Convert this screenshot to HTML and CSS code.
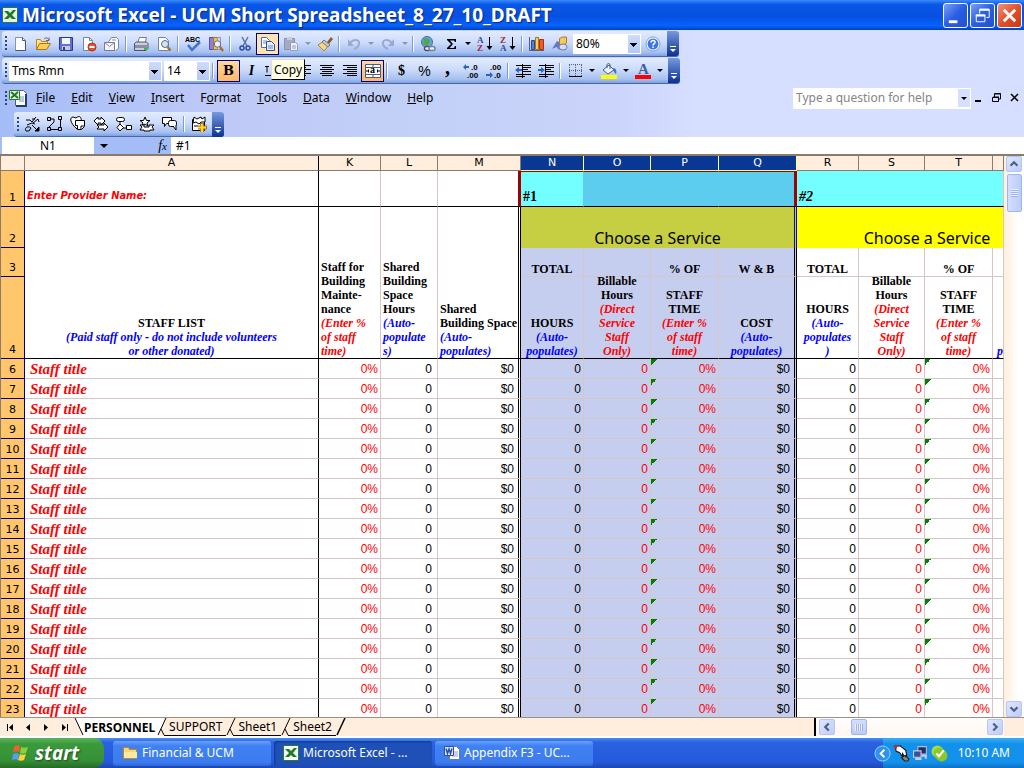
FILE: index.html
```html
<!DOCTYPE html>
<html lang="en">
<head>
<meta charset="utf-8">
<title>Microsoft Excel - UCM Short Spreadsheet_8_27_10_DRAFT</title>
<link rel="stylesheet" href="styles.css">
</head>
<body>
<header class="titlebar">
  <svg class="i16" viewBox="0 0 16 16"><rect x=".5" y=".5" width="15" height="15" fill="#e8f2e4" stroke="#2c7a2c"/><path d="M2 4h4l2 2 3-3h3l-4 5 4 4h-4l-2-2-2 2H2l4-4z" fill="#1f7a2a"/></svg>
  <h1>Microsoft Excel - UCM Short Spreadsheet_8_27_10_DRAFT</h1>
  <button class="wbtn" aria-label="Minimize"><svg viewBox="0 0 24 24"><path d="M5 17h9v3H5z" fill="#fff"/></svg></button>
  <button class="wbtn" aria-label="Restore"><svg viewBox="0 0 24 24" fill="none" stroke="#fff"><path d="M9 10V5.500h10V14h-3"/><path d="M9 6h10M5 12h10" stroke-width="2"/><path d="M5.500 11.500h9v7h-9z"/></svg></button>
  <button class="wbtn close" aria-label="Close"><svg viewBox="0 0 24 24"><path d="M6 6l12 12M18 6L6 18" stroke="#fff" stroke-width="3"/></svg></button>
</header>

<section class="bars">
  <div class="toolbar">
    <span class="grip"></span>
    <button class="btn" aria-label="New"><svg viewBox="0 0 16 16"><path d="M3.500 1.500h7l3 3v10h-10z" fill="#fff" stroke="#8793b5"/><path d="M10.500 1.500v3h3M13.500 5v9.500h-10" fill="none" stroke="#46547c"/></svg></button>
    <button class="btn" aria-label="Open"><svg viewBox="0 0 16 16"><path d="M1.500 13.500v-10h4l1 2h6v3" fill="#ffe58b" stroke="#b9862a"/><path d="M1.500 13.500l3-6h11l-4 6z" fill="#ffcf55" stroke="#a8741c"/><path d="M9 3c2-2 4-1 5 1M14 1.500V4.500h-3" fill="none" stroke="#5a6788"/></svg></button>
    <button class="btn" aria-label="Save"><svg viewBox="0 0 16 16"><path d="M1.500 1.500h13v13h-12l-1-1z" fill="#6071cf" stroke="#2c3a91"/><path d="M4 2h8v6H4z" fill="#f4f6ff"/><path d="M4 10h8v4H4z" fill="#c4c9de"/><path d="M5 11h2v3H5z" fill="#2c3a91"/></svg></button>
    <button class="btn" aria-label="Permission"><svg viewBox="0 0 16 16"><path d="M2.500 1.500h6l3 3v10h-9z" fill="#fff" stroke="#7785ad"/><path d="M8.500 1.500v3h3" fill="none" stroke="#7785ad"/><circle cx="11" cy="11" r="4" fill="#e4502e" stroke="#b53418"/><path d="M8.500 10h5v2h-5z" fill="#fff"/></svg></button>
    <button class="btn" aria-label="E-mail"><svg viewBox="0 0 16 16"><path d="M4.500 6l3-4.500h5l2 2v9l-3 2" fill="#fff" stroke="#7785ad"/><path d="M.5 6.500h10v8H.5z" fill="#f3f3f8" stroke="#777c90"/><path d="M.5 6.500l5 4 5-4M8 4h4" fill="none" stroke="#8b8fa3"/></svg></button>
    <span class="sep"></span>
    <button class="btn" aria-label="Print"><svg viewBox="0 0 16 16"><path d="M4.500 7l2-5.500h7L12 7" fill="#fff" stroke="#6b7aa5"/><path d="M1.500 7.500l2-1.500h10l1.500 1.500v5l-2 2H1.500z" fill="#c9cddc" stroke="#4c5468"/><path d="M2 9h12v3H2z" fill="#888fa6"/><path d="M11 12h3v2h-3z" fill="#2fc33c"/></svg></button>
    <button class="btn" aria-label="Print Preview"><svg viewBox="0 0 16 16"><path d="M2.500 1.500h7l3 3v10h-10z" fill="#fff" stroke="#7785ad"/><circle cx="9" cy="8" r="3.500" fill="#cde4fa" stroke="#5c6b8c"/><path d="M11.500 11l3 3.500" stroke="#b06a27" stroke-width="2.500"/></svg></button>
    <span class="sep"></span>
    <button class="btn" aria-label="Spelling"><svg viewBox="0 0 16 16"><text x="0" y="6" font-size="7" font-family="Liberation Sans" font-weight="700">ABC</text><path d="M3 9l4 5 8-8" fill="none" stroke="#3d73d8" stroke-width="2.500"/></svg></button>
    <button class="btn" aria-label="Research"><svg viewBox="0 0 16 16"><path d="M1.500 1.500h4v12h-4z" fill="#8c7fe0" stroke="#5c4cb0"/><path d="M5.500 1.500h4v12h-4z" fill="#f5bf43" stroke="#a87520"/><path d="M9.500 1.500h3v12h-3z" fill="#d2d8f6" stroke="#8b93c9"/><circle cx="9.500" cy="8" r="3.200" fill="#eaf4ff" stroke="#676d84"/><path d="M12 11l3 4" stroke="#b06a27" stroke-width="2.500"/></svg></button>
    <span class="sep"></span>
    <button class="btn" aria-label="Cut"><svg viewBox="0 0 16 16" fill="none"><path d="M5 1l5 9M11 1L6 10" stroke="#5874ae" stroke-width="1.500"/><circle cx="5" cy="12" r="2" stroke="#2d4f9c" stroke-width="1.500"/><circle cx="11" cy="12" r="2" stroke="#2d4f9c" stroke-width="1.500"/></svg></button>
    <button class="btn on copy" aria-label="Copy"><svg viewBox="0 0 16 16"><path d="M1.500 1.500h5l3 3v7h-8z" fill="#fff" stroke="#4c6ab5"/><path d="M6.500 5.500h5l3 3v6h-8z" fill="#e2ecff" stroke="#2d4f9c"/><path d="M3 5h4M3 7h3M8 10h5M8 12h5" stroke="#6a87c8"/></svg></button>
    <button class="btn" aria-label="Paste"><svg viewBox="0 0 16 16"><path d="M1.500 2.500h10v11h-10z" fill="#a3aac6" stroke="#8a92b4"/><path d="M4 1h5v3H4z" fill="#c8cde0"/><path d="M7.500 6.500h5l2 2v6h-7z" fill="#edf0fa" stroke="#949cbd"/><path d="M9 10h4M9 12h4" stroke="#949cbd"/></svg></button>
    <button class="arr dim" aria-label="Paste options"></button>
    <button class="btn" aria-label="Format Painter"><svg viewBox="0 0 16 16"><path d="M10 6l4-5 2 2-4 5z" fill="#8c5b22"/><path d="M1 9l6-4 5 4-5 6z" fill="#f6d583" stroke="#b08538"/><path d="M7 4l6 5-2 2-6-5z" fill="#c9c9d6" stroke="#777"/></svg></button>
    <span class="sep"></span>
    <button class="btn" aria-label="Undo"><svg viewBox="0 0 16 16"><path d="M4 7c4-5 10-3 9 1-.5 2-2 4-5 5" fill="none" stroke="#9ba8d1" stroke-width="2"/><path d="M2 3v7h6z" fill="#9ba8d1"/></svg></button>
    <button class="arr dim" aria-label="Undo list"></button>
    <button class="btn" aria-label="Redo"><svg viewBox="0 0 16 16"><path d="M12 7C8 2 2 4 3 8c.5 2 2 4 5 5" fill="none" stroke="#9ba8d1" stroke-width="2"/><path d="M14 3v7H8z" fill="#9ba8d1"/></svg></button>
    <button class="arr dim" aria-label="Redo list"></button>
    <span class="sep"></span>
    <button class="btn" aria-label="Hyperlink"><svg viewBox="0 0 16 16"><circle cx="7" cy="6" r="5.500" fill="#6aa2e0" stroke="#3b6fb0"/><path d="M4 2l5 1 1 3-3 4-4-2z" fill="#4fa845"/><rect x="4.500" y="10.500" width="6" height="4" rx="2" fill="#e6eaf4" stroke="#4a5568" stroke-width="1.500"/><rect x="9" y="10.500" width="6" height="4" rx="2" fill="#e6eaf4" stroke="#76829a" stroke-width="1.500"/></svg></button>
    <button class="btn" aria-label="AutoSum"><svg viewBox="0 0 16 16"><path d="M4 3h9v3h-1l-1-1.500H7L10 8l-3.500 4H11l1-2h1v3H4v-1l4-4-4-4z"/></svg></button>
    <button class="arr" aria-label="Sum options"></button>
    <button class="btn" aria-label="Sort Ascending"><svg viewBox="0 0 16 16"><text x="0" y="7" font-size="9" font-family="Liberation Serif" font-weight="700" fill="#2d4f9c">A</text><text x="0" y="15" font-size="9" font-family="Liberation Serif" font-weight="700" fill="#a3263c">Z</text><path d="M12.500 1v12" stroke="#000"/><path d="M9.500 10h6l-3 4z"/></svg></button>
    <button class="btn" aria-label="Sort Descending"><svg viewBox="0 0 16 16"><text x="0" y="7" font-size="9" font-family="Liberation Serif" font-weight="700" fill="#a3263c">Z</text><text x="0" y="15" font-size="9" font-family="Liberation Serif" font-weight="700" fill="#2d4f9c">A</text><path d="M12.500 1v12" stroke="#000"/><path d="M9.500 10h6l-3 4z"/></svg></button>
    <span class="sep"></span>
    <button class="btn" aria-label="Chart Wizard"><svg viewBox="0 0 16 16"><path d="M.5 1v13.500H15" fill="none" stroke="#555e7c"/><path d="M2.500 4.500h3v9h-3z" fill="#4f7fe0" stroke="#274b9c"/><path d="M6.500 1.500h3v12h-3z" fill="#ffd24a" stroke="#a5761b"/><path d="M10.500 3.500h4v10h-4z" fill="#ee5a2c" stroke="#a5330f"/></svg></button>
    <button class="btn" aria-label="Drawing"><svg viewBox="0 0 16 16"><path d="M7.500 2.500l3-1.500h4v6l-3 2h-4z" fill="#f5c95a" stroke="#aa7e2a"/><path d="M0 13l5-8 2 1 2 8-3-1-1-2-3 1z" fill="#6974c9"/><ellipse cx="11" cy="11" rx="4" ry="3" fill="#d9deee" stroke="#747c9a"/></svg></button>
    <select class="combo zoom" aria-label="Zoom"><option>80%</option></select>
    <button class="btn" aria-label="Help"><svg viewBox="0 0 16 16"><circle cx="8" cy="8" r="7" fill="#fff" stroke="#7b9ee5"/><circle cx="8" cy="8" r="5.500" fill="#3d78e0"/><path d="M6 6.500c0-3 4.500-2.500 4 0-.3 1.200-2 1.200-2 3M8 10.500V12" fill="none" stroke="#fff" stroke-width="1.500"/></svg></button>
    <button class="tail" aria-label="Toolbar options"><svg viewBox="0 0 8 8"><path d="M1 1.500h6" stroke="#fff"/><path d="M1 4h6L4 7z" fill="#fff"/></svg></button>
  </div>

  <div class="toolbar">
    <span class="grip"></span>
    <select class="combo face" aria-label="Font"><option>Tms Rmn</option></select>
    <select class="combo size" aria-label="Font size"><option>14</option></select>
    <span class="sep"></span>
    <button class="btn on glyph bold">B</button>
    <button class="btn glyph ital">I</button>
    <button class="btn glyph under" aria-label="Underline"><svg viewBox="0 0 16 16"><path d="M2 3.500h4M4 3.500v6M2 12.500h12" stroke="#000"/></svg></button>
    <span class="sep"></span>
    <button class="btn" aria-label="Align Left"><svg viewBox="0 0 16 16" stroke="#000"><path d="M1 2.500h14M1 4.500h9M1 6.500h14M1 8.500h9M1 10.500h14M1 12.500h9"/></svg></button>
    <button class="btn" aria-label="Center"><svg viewBox="0 0 16 16" stroke="#000"><path d="M1 2.500h14M3 4.500h10M1 6.500h14M3 8.500h10M1 10.500h14M3 12.500h10"/></svg></button>
    <button class="btn" aria-label="Align Right"><svg viewBox="0 0 16 16" stroke="#000"><path d="M1 2.500h14M5 4.500h10M1 6.500h14M5 8.500h10M1 10.500h14M5 12.500h10"/></svg></button>
    <button class="btn on" aria-label="Merge and Center"><svg viewBox="0 0 16 16"><path d="M.5 1.500h15v13H.5z" fill="#fff" stroke="#4c5a80"/><path d="M1 4.500h14M1 11.500h14M8 1v3M8 12v3" stroke="#4c5a80"/><path d="M1 8h3M12 8h3M3.500 6.500v3M12.500 6.500v3" stroke="#000"/><text x="5" y="10" font-size="10" font-family="Liberation Serif" font-weight="700">a</text></svg></button>
    <span class="sep"></span>
    <button class="btn glyph">$</button>
    <button class="btn glyph pct">%</button>
    <button class="btn glyph comma">,</button>
    <button class="btn" aria-label="Increase Decimal"><svg viewBox="0 0 16 16"><path d="M0 4l3-3v2h3v2H3v2z" fill="#2d62c4"/><text x="8" y="7" font-size="8" font-family="Liberation Sans" font-weight="700">.0</text><text x="4" y="15" font-size="8" font-family="Liberation Sans" font-weight="700">.00</text></svg></button>
    <button class="btn" aria-label="Decrease Decimal"><svg viewBox="0 0 16 16"><path d="M7 12l-3-3v2H0v2h4v2z" fill="#2d62c4"/><text x="4" y="7" font-size="8" font-family="Liberation Sans" font-weight="700">.00</text><text x="8" y="15" font-size="8" font-family="Liberation Sans" font-weight="700">.0</text></svg></button>
    <span class="sep"></span>
    <button class="btn" aria-label="Decrease Indent"><svg viewBox="0 0 16 16"><path d="M1 2.500h15M8 4.500h8M8 6.500h5M8 8.500h8M1 11.500h15M1 13.500h9M7.500 1v14" stroke="#000"/><path d="M0 7l4-3v2h3v2H4v2z" fill="#2d62c4"/></svg></button>
    <button class="btn" aria-label="Increase Indent"><svg viewBox="0 0 16 16"><path d="M1 2.500h15M8 4.500h8M8 6.500h5M8 8.500h8M1 11.500h15M1 13.500h9M7.500 1v14" stroke="#000"/><path d="M7 7L3 4v2H0v2h3v2z" fill="#2d62c4"/></svg></button>
    <span class="sep"></span>
    <button class="btn" aria-label="Borders"><svg viewBox="0 0 16 16"><path d="M2 1.500h13M2 7.500h13M2.500 2v12M8.500 2v12M14.500 2v12" stroke="#5c6070" stroke-dasharray="1 1"/><path d="M2 13.500h13" stroke="#000"/></svg></button>
    <button class="arr" aria-label="Border options"></button>
    <button class="btn" aria-label="Fill Color"><svg viewBox="0 0 16 16"><path d="M2 7l6-5 5 5-6 4z" fill="#eef4ff" stroke="#44598c"/><path d="M6 5V2c0-2 3-2 3 0v4" fill="none" stroke="#44598c"/><path d="M12 5c3 0 4 3 3 6-2-1-2-3-3-6" fill="#3f6fd2"/><path d="M0 12h16v4H0z" fill="#ff0"/></svg></button>
    <button class="arr" aria-label="Fill options"></button>
    <button class="btn" aria-label="Font Color"><svg viewBox="0 0 16 16"><text x="3" y="11" font-size="15" font-family="Liberation Serif" font-weight="700" fill="#3f5f9f">A</text><path d="M0 12h16v4H0z" fill="red"/></svg></button>
    <button class="arr" aria-label="Font color options"></button>
    <button class="tail" aria-label="Toolbar options"><svg viewBox="0 0 8 8"><path d="M1 1.500h6" stroke="#fff"/><path d="M1 4h6L4 7z" fill="#fff"/></svg></button>
    <span class="tip" role="tooltip">Copy</span>
  </div>

  <nav class="menubar">
    <span class="grip"></span>
    <svg class="doc" viewBox="0 0 18 18"><path d="M6.500 1.500h8l3 3v12h-11z" fill="#fff" stroke="#4c6190"/><path d="M17 5v12H7" fill="none" stroke="#243d70" stroke-width="2"/><path d="M10 8h5M10 10h5M10 12h5" stroke="#7d93c4"/><path d="M.5 1.500h10v9H.5z" fill="#e7f3e2" stroke="#2c7a2c"/><path d="M2 3l7 6M9 3L2 9" stroke="#1f7a2a" stroke-width="2"/></svg>
    <button class="menu"><u>F</u>ile</button><button class="menu"><u>E</u>dit</button><button class="menu"><u>V</u>iew</button><button class="menu"><u>I</u>nsert</button><button class="menu">F<u>o</u>rmat</button><button class="menu"><u>T</u>ools</button><button class="menu"><u>D</u>ata</button><button class="menu"><u>W</u>indow</button><button class="menu"><u>H</u>elp</button>
    <span class="ask"><input type="text" placeholder="Type a question for help" aria-label="Type a question for help"><button class="arr" aria-label="Questions"></button></span>
    <button class="mini" aria-label="Minimize workbook"><svg viewBox="0 0 10 10"><path d="M1 8h6" stroke="#000" stroke-width="2"/></svg></button>
    <button class="mini" aria-label="Restore workbook"><svg viewBox="0 0 10 10" fill="none" stroke="#000"><path d="M2.500 4V.5h6V6H7M3 1h6M1 4h6"/><path d="M.5 4.500h6v4h-6z"/></svg></button>
    <button class="mini" aria-label="Close workbook"><svg viewBox="0 0 10 10"><path d="M1 1l7 7M8 1L1 8" stroke="#000" stroke-width="1.500"/></svg></button>
  </nav>

  <div class="toolbar diagram">
    <span class="grip"></span>
    <button class="btn" aria-label="Lines"><svg viewBox="0 0 16 16" fill="none" stroke="#000"><path d="M2 4h4l2 2 4-5M8 3h3M9 7l5-4 1 3M3 9l5-2 3 1M2 15c-2-3 2-6 5-3l-2 3zM8 9l6 6"/><path d="M15 15h-4l4-4z" fill="#000"/></svg></button>
    <button class="btn" aria-label="Connectors"><svg viewBox="0 0 16 16" fill="none" stroke="#000"><path d="M.5 1.500h3v3h-3zM11.500 .5h3v3h-3zM.5 11.500h3v3h-3zM11.500 11.500h3v3h-3zM4 3h3v3l-5 5M13.500 4v7M4 13.500h7"/></svg></button>
    <button class="btn" aria-label="Basic Shapes"><svg viewBox="0 0 16 16" fill="#fff" stroke="#000"><path d="M7 13C-1 6 0 1 3 1l3 1c3-3 6-1 5 3z"/><path d="M5.500 4.500h9v6l-3 3h-4v-4h-2zM11 13v-3h3"/></svg></button>
    <button class="btn" aria-label="Block Arrows"><svg viewBox="0 0 16 16" fill="#fff" stroke="#000"><path d="M1 5l4-4v2h3V1l4 4-4 4V7H5v2z"/><path d="M4 9h7V7l4 4-4 4v-2H4l2-2z"/></svg></button>
    <button class="btn" aria-label="Flowchart"><svg viewBox="0 0 16 16" fill="#fff" stroke="#000"><path d="M4 4v8h6"/><rect x=".5" y="1.500" width="8" height="4" rx="2"/><path d="M4 8l3.500 3.500L4 15l-3-3.500zM10.500 9.500h5v4h-5z"/></svg></button>
    <button class="btn" aria-label="Stars and Banners"><svg viewBox="0 0 16 16" fill="#fff" stroke="#000"><path d="M6 1l1.500 3.500H11L8 7l1 3-3-2-3 2 1-3-3-2.500h3.500z"/><path d="M1 9h4v2h5V9h5l-2 2 2 3h-4v1H5v-1H1l2-3z"/></svg></button>
    <button class="btn" aria-label="Callouts"><svg viewBox="0 0 16 16" fill="#fff" stroke="#000"><path d="M.5 1.500h9v6h-5l-2 3v-3h-2z"/><rect x="6.500" y="4.500" width="8" height="6" rx="2"/><path d="M11 10l3 4v-4"/></svg></button>
    <span class="sep"></span>
    <button class="btn" aria-label="More AutoShapes"><svg viewBox="0 0 16 16" fill="#fff" stroke="#000"><path d="M1.500 3.500h12v11h-12z"/><path d="M3 1l3 2 4-2 1 2 3-2v5h-4L8 8 5 6 2 7zM3 10h4"/><path d="M11 7v9M7 11.500h9" stroke="#a8741c" stroke-width="4"/><path d="M11 8v8M7 11.500h8" stroke="#ffd530" stroke-width="2"/></svg></button>
    <button class="tail" aria-label="Toolbar options"><svg viewBox="0 0 8 8"><path d="M1 1.500h6" stroke="#fff"/><path d="M1 4h6L4 7z" fill="#fff"/></svg></button>
  </div>
</section>

<section class="formula">
  <input class="name" type="text" value="N1" aria-label="Name box">
  <button class="arr" aria-label="Names"></button>
  <span class="fx">f<small>x</small></span>
  <input class="content" type="text" value="#1" aria-label="Formula">
</section>

<main class="work">
  <div class="pane">
    <table class="sheet">
      <colgroup><col class="ch"><col class="ca"><col class="ck"><col class="cl"><col class="cm"><col class="cn"><col class="co"><col class="cp"><col class="cq"><col class="cr"><col class="cs"><col class="ct"><col></colgroup>
      <thead>
        <tr><th></th><th class="edge">A</th><th>K</th><th>L</th><th>M</th><th class="sel">N</th><th class="sel">O</th><th class="sel">P</th><th class="sel">Q</th><th>R</th><th>S</th><th>T</th><th></th></tr>
      </thead>
      <tbody id="rows">
        <tr class="r1"><th>1</th><td class="edge provider">Enter Provider Name:</td><td></td><td></td><td class="mark"></td><td class="tag active">#1</td><td class="deep" colspan="2"></td><td class="deep mark"></td><td class="tag slant" colspan="4">#2</td></tr>
        <tr class="r2"><th>2</th>
          <td class="edge head mid" rowspan="3">STAFF LIST<br><i class="blue">(Paid staff only - do not include volunteers<br>or other donated)</i></td>
          <td class="head" rowspan="3">Staff for<br>Building<br>Mainte-<br>nance<br><i class="red">(Enter %<br>of staff<br>time)</i></td>
          <td class="head" rowspan="3">Shared<br>Building<br>Space<br>Hours<br><i class="blue">(Auto-<br>populate<br>s)</i></td>
          <td class="head twin" rowspan="3">Shared<br>Building Space<br><i class="blue">(Auto-<br>populates)</i></td>
          <td class="service olive twin bluetwin" colspan="4">Choose a Service</td>
          <td class="service yellow" colspan="4"><div>Choose a Service</div></td></tr>
        <tr class="r3"><th>3</th><td class="pick">TOTAL</td><td class="pick"></td><td class="pick">% OF</td><td class="pick twin">W &amp; B</td><td>TOTAL</td><td></td><td>% OF</td><td></td></tr>
        <tr class="r4"><th>4</th>
          <td class="pick"><div>HOURS<i class="blue">(Auto-<br>populates)</i></div></td>
          <td class="pick"><div>Billable<br>Hours<i class="red">(Direct<br>Service<br>Staff<br>Only)</i></div></td>
          <td class="pick"><div>STAFF<br>TIME<i class="red">(Enter %<br>of staff<br>time)</i></div></td>
          <td class="pick twin"><div>COST<i class="blue">(Auto-<br>populates)</i></div></td>
          <td><div>HOURS<i class="blue">(Auto-<br>populates<br>)</i></div></td>
          <td><div>Billable<br>Hours<i class="red">(Direct<br>Service<br>Staff<br>Only)</i></div></td>
          <td><div>STAFF<br>TIME<i class="red">(Enter %<br>of staff<br>time)</i></div></td>
          <td class="cut"><div><i class="blue">populates)</i></div></td></tr>
      </tbody>
    </table>
  </div>
  <div class="vscroll">
    <button class="sb" aria-label="Scroll up"><svg viewBox="0 0 16 16"><path d="M4 10l4-4 4 4" fill="none" stroke="#4d6185" stroke-width="2.500"/></svg></button>
    <span class="thumb"></span>
    <button class="sb" aria-label="Scroll down"><svg viewBox="0 0 16 16"><path d="M4 6l4 4 4-4" fill="none" stroke="#4d6185" stroke-width="2.500"/></svg></button>
  </div>
</main>

<section class="tabs">
  <button class="nav" aria-label="First sheet"><svg viewBox="0 0 9 9"><path d="M1 1h1v7H1zM7 1v7L3 4.500z"/></svg></button>
  <button class="nav" aria-label="Previous sheet"><svg viewBox="0 0 9 9"><path d="M6 1v7L2 4.500z"/></svg></button>
  <button class="nav" aria-label="Next sheet"><svg viewBox="0 0 9 9"><path d="M2 1v7l4-3.500z"/></svg></button>
  <button class="nav" aria-label="Last sheet"><svg viewBox="0 0 9 9"><path d="M7 1h1v7H7zM2 1v7l4-3.500z"/></svg></button>
  <svg class="slash first" viewBox="0 0 10 18"><path d="M0 0h10v18H9z" fill="#fff"/><path d="M1 0l8 17" stroke="#000"/></svg>
  <button class="tab current">PERSONNEL</button>
  <svg class="slash" viewBox="0 0 10 18"><path d="M0 0h8L1 18H0z" fill="#fff"/><path d="M9 0L1 17M4 11l3 6M7 17.500h3" stroke="#000"/></svg>
  <button class="tab">SUPPORT</button>
  <svg class="slash" viewBox="0 0 10 18"><path d="M9 0L1 17M4 11l3 6M7 17.500h3" stroke="#000"/></svg>
  <button class="tab">Sheet1</button>
  <svg class="slash" viewBox="0 0 10 18"><path d="M9 0L1 17M4 11l3 6M7 17.500h3" stroke="#000"/></svg>
  <button class="tab">Sheet2</button>
  <svg class="slash" viewBox="0 0 10 18"><path d="M9 0L1 17" stroke="#000" stroke-width="1.500"/></svg>
  <div class="hscroll">
    <button class="sb" aria-label="Scroll left"><svg viewBox="0 0 16 16"><path d="M10 4L6 8l4 4" fill="none" stroke="#4d6185" stroke-width="2.500"/></svg></button>
    <span class="thumb"></span>
    <button class="sb" aria-label="Scroll right"><svg viewBox="0 0 16 16"><path d="M6 4l4 4-4 4" fill="none" stroke="#4d6185" stroke-width="2.500"/></svg></button>
  </div>
</section>

<footer class="taskbar">
  <button class="start"><svg viewBox="0 0 20 20"><path d="M3 4c2-2 4-2 6-1L8 9C6 8 4 8 2 10z" fill="#f0602c"/><path d="M10 4c2 1 4 1 7 0l-2 6c-2 1-4 1-6 0z" fill="#8ccf3c"/><path d="M2 11c2-1 4-1 6 0l-1 6c-2-1-4-1-6 0z" fill="#5a9cf5"/><path d="M9 11c2 1 4 1 6 0l-2 6c-2 1-4 1-6 0z" fill="#fbd13c"/></svg>start</button>
  <button class="task"><svg viewBox="0 0 16 16"><path d="M1.500 13.500v-11h5l1 2h7v9z" fill="#ffd668" stroke="#b88a2c"/><path d="M2 7h13v6H2z" fill="#ffe99e"/></svg>Financial &amp; UCM</button>
  <button class="task pressed"><svg viewBox="0 0 16 16"><rect x=".5" y=".5" width="15" height="15" fill="#f4faf2" stroke="#2c7a2c"/><path d="M2 4h4l2 2 3-3h3l-4 5 4 4h-4l-2-2-2 2H2l4-4z" fill="#1f7a2a"/></svg>Microsoft Excel - ...</button>
  <button class="task"><svg viewBox="0 0 16 16"><path d="M5.500 1.500h7l3 3v10h-10z" fill="#fff" stroke="#6478a8"/><path d="M8 7h6M8 9h6M8 11h6" stroke="#8ba0d0"/><path d="M.5 1.500h9v9h-9z" fill="#dfe9ff" stroke="#2b4fa5"/><path d="M2 3.500l1.500 5L5 4l1.500 4.500L8 3.500" fill="none" stroke="#2b4fa5" stroke-width="1.500"/></svg>Appendix F3 - UC...</button>
  <div class="tray">
    <button class="expand" aria-label="Show hidden icons"><svg viewBox="0 0 18 18"><circle cx="9" cy="9" r="8" fill="#2e92ee" stroke="#a3d6ff"/><path d="M11 5L7 9l4 4" fill="none" stroke="#fff" stroke-width="2"/></svg></button>
    <svg viewBox="0 0 16 16"><path d="M2 1h5l5 4 1 6-1-1-1 1-2-3v3L6 7l-3-1z" fill="#fff" stroke="#111"/><path d="M0 1l5-1-2 4z" fill="#e02020"/><path d="M8 12l3-2 4 3-1 2h-3z" fill="#8c8478" stroke="#222"/></svg>
    <svg viewBox="0 0 16 16"><path d="M5.500 1.500h8v7h-8z" fill="#26305f" stroke="#b4bad6"/><path d="M1.500 5.500h7v6h-7z" fill="#3c4d99" stroke="#c9cde2"/><path d="M3 13h6M9 10h4v3" stroke="#c9cde2" fill="none" stroke-width="2"/></svg>
    <svg viewBox="0 0 16 16"><circle cx="6" cy="6" r="5.500" fill="#a9d84a"/><circle cx="10" cy="10" r="5.500" fill="#8ac926"/><circle cx="8" cy="8" r="5.500" fill="#8ac926"/><path d="M5 8l2.500 2.500L12 5" fill="none" stroke="#fff" stroke-width="2"/></svg>
    <time>10:10 AM</time>
  </div>
</footer>
<script src="rows.js"></script>
</body>
</html>
```

FILE: rows.js
```js
const body = document.getElementById("rows");
const cells = [
  ["edge title", "Staff title"], ["red", "0%"], ["", "0"], ["twin", "$0"],
  ["pick", "0"], ["pick red", "0"], ["pick red flag", "0%"], ["pick twin", "$0"],
  ["", "0"], ["red", "0"], ["red flag", "0%"], ["", ""]
];
for (let n = 6; n <= 23; n++) {
  const tr = document.createElement("tr");
  tr.className = "data";
  const th = document.createElement("th");
  th.textContent = n;
  tr.append(th);
  for (const [cls, text] of cells) {
    const td = document.createElement("td");
    td.className = cls;
    td.textContent = text;
    tr.append(td);
  }
  body.append(tr);
}
```

FILE: styles.css
```css
* { box-sizing: border-box; }
body { margin: 0; height: 100vh; display: flex; flex-direction: column; overflow: hidden; font: 12px/16px "Noto Sans", "Open Sans", sans-serif; color: #000; background: #d6dfff; }
button, input, select { font: inherit; color: inherit; margin: 0; padding: 0; border: 0; border-radius: 0; background: none; }
button { display: flex; align-items: center; justify-content: center; flex: none; }
svg { display: block; flex: none; }

.titlebar { display: flex; align-items: center; flex: none; height: 30px; padding: 0 2px; gap: 2px; background: linear-gradient(#3a8bff, #0a57e8 15%, #0650e0 55%, #0663ff 85%, #0340c0); }
.i16 { width: 16px; height: 16px; }
.titlebar h1 { flex: 1; min-width: 0; overflow: hidden; margin: 0 0 0 2px; font: 700 19px/28px "Noto Sans", sans-serif; color: #fff; text-shadow: 1px 1px 1px #0a2a80; white-space: nowrap; }
.wbtn { width: 25px; height: 25px; border: 1px solid #fff; border-radius: 3px; background: linear-gradient(135deg, #7ba0f5, #2a5ee2 50%, #2450cf); }
.wbtn svg { width: 23px; height: 23px; }
.wbtn.close { background: linear-gradient(135deg, #f0937a, #e2502a 50%, #c53a14); }

.bars { flex: none; padding-top: 1px; background: linear-gradient(90deg, #a5bdf7, #bfc9f7 22%, #c2d0f7 40%, #cbd4fb 60%, #d6dfff 68%); }
.toolbar { position: relative; display: flex; align-items: center; width: max-content; height: 26px; margin: 0 0 1px 2px; padding-left: 3px; border-radius: 3px; background: linear-gradient(#e2ebff, #cddcfb 45%, #a6c0f0 85%, #7e9fe0); border-bottom: 1px solid #4568ad; }
.toolbar.diagram { margin: 1px 0 0 14px; height: 25px; }
.grip { width: 3px; height: 15px; flex: none; background: repeating-linear-gradient(#2b4587 0 2px, transparent 2px 4px) 0 0 / 2px 100% no-repeat; }
.btn { width: 23px; height: 22px; }
.btn svg { width: 16px; height: 16px; }
.btn.on { border: 1px solid #000080; background: linear-gradient(#ffd8a0, #ffb765); }
.btn.copy { background: #ffe3b0; }
.sep { width: 6px; height: 16px; flex: none; background: linear-gradient(90deg, transparent 2px, #7c9ad6 2px 3px, #fff 3px 4px, transparent 4px); }
.arr { width: 11px; height: 18px; }
.arr::before { content: ""; border: 3px solid transparent; border-top-color: #000; border-bottom: 0; }
.arr.dim::before { border-top-color: #8d93a8; }
.glyph { font: 700 14px/18px "Liberation Serif", serif; }
.glyph.bold { font-family: "DejaVu Serif", serif; font-size: 13px; margin-left: 1px; }
.ital { font-style: italic; }
.under { justify-content: flex-start; }
.pct { font-family: "Liberation Sans", sans-serif; font-weight: 400; }
.comma { font-size: 20px; padding-bottom: 8px; }
.combo { appearance: none; height: 20px; padding: 0 3px; background-color: #fff; background-image: linear-gradient(45deg, transparent 50%, #000 50%), linear-gradient(-45deg, transparent 50%, #000 50%), linear-gradient(#cfdcfa, #b4c8f4); background-image: conic-gradient(from 315deg at 50% 100%, #000 90deg, transparent 0), linear-gradient(#cfdcfa, #b4c8f4); background-image: linear-gradient(to bottom left, #000 50%, transparent 50%), linear-gradient(to bottom right, #000 50%, transparent 50%), linear-gradient(#cfdcfa, #b4c8f4); background-position: right 7px top 9px, right 3px top 9px, right 1px top 1px; background-size: 4px 4px, 4px 4px, 12px 18px; background-repeat: no-repeat; }
.zoom { width: 68px; margin-left: 2px; }
.face { width: 153px; margin-left: 1px; }
.size { width: 46px; margin-left: 2px; }
.tail { width: 12px; height: 25px; margin-left: 3px; align-items: flex-end; padding-bottom: 3px; border-radius: 0 3px 3px 0; background: linear-gradient(#7799e0, #0b3290); }
.tail svg { width: 8px; height: 8px; }
.diagram .tail { margin-left: 2px; }
.tip { position: absolute; left: 269px; top: 1px; height: 21px; padding: 0 2px; line-height: 19px; background: #ffffe1; border: 1px solid #000; border-top-color: #ddd; border-left-color: #ddd; }

.menubar { display: flex; align-items: center; height: 26px; padding: 0 1px 0 5px; }
.doc { width: 18px; height: 18px; margin: 0 2px 0 1px; }
.menu { padding: 0 7px; height: 20px; }
.menu + .menu { margin-left: 2px; }
.ask { display: flex; align-items: center; width: 178px; height: 21px; margin-left: auto; padding: 1px; background: #fff; }
.ask input { flex: 1; min-width: 0; padding-left: 2px; }
.ask input::placeholder { color: #858585; opacity: 1; }
.ask .arr { background: #d6dfff; width: 12px; }
.mini { width: 16px; height: 16px; }
.mini + .mini { margin-left: 2px; }
.mini svg { width: 10px; height: 10px; }

.formula { display: flex; align-items: center; flex: none; height: 17px; padding-left: 2px; background: #a5bdf7; }
.name { width: 92px; height: 17px; background: #fff; text-align: center; }
.formula .arr { width: 20px; }
.formula .arr::before { border-width: 4px 4px 0; }
.fx { width: 57px; padding-right: 4px; text-align: right; font: italic 400 14px/16px "Liberation Serif", serif; }
.fx small { font-size: 11px; }
.content { flex: 1; height: 17px; padding-left: 5px; background: #fff; }

.work { flex: 1; display: flex; min-height: 0; border-top: 2px solid #8c7b6b; background: #fff6ee; }
.pane { flex: 1; min-width: 0; overflow: hidden; border-left: 1px solid #8c7b6b; background: #fff; }
.sheet { width: 100%; table-layout: fixed; border-collapse: separate; border-spacing: 0; }
.ch { width: 24px; } .ca { width: 294px; } .ck { width: 62px; } .cl { width: 57px; } .cm { width: 83px; } .cn { width: 63px; } .co { width: 67px; } .cp { width: 68px; } .cq { width: 78px; } .cr { width: 62px; } .cs { width: 66px; } .ct { width: 68px; }
.sheet th { padding: 0; font: 400 11px/14px "DejaVu Sans", sans-serif; }
.sheet thead th { height: 15px; background: #ffeedd; border-right: 1px solid #8c7b6b; border-bottom: 1px solid #8c7b6b; }
.sheet thead th.sel { background: #083794; color: #fff; border-color: #ffff80; }
.sheet tbody th { background: #ffc66b; border-right: 1px solid #000080; border-bottom: 1px solid #000080; vertical-align: bottom; line-height: 16px; }
.sheet td { padding: 0 2px; border-right: 1px solid #d6c6c6; border-bottom: 1px solid #d6c6c6; vertical-align: bottom; }
.sheet .edge { border-right-color: #000; }
.sheet .twin { border-right: 3px double #000; }
.sheet .bluetwin { border-right-color: #00f; }
.sheet .pick { background-color: #c6ceef; }
.red { color: #f00; }
.blue { color: #00f; }
.r1 td { height: 36px; border-bottom-color: #000; }
.sheet .r1 .mark { border-right: 3px solid #a00000; }
.provider { color: #f00; font: italic 700 11px/20px "DejaVu Sans Condensed", "Noto Sans", sans-serif; }
.tag { font: 700 14px/18px "Liberation Serif", serif; background: #73ffff; }
.sheet .active, .sheet .deep { border-top: 1px solid #a00000; border-right-color: transparent; }
.deep { background: #5ccdee; }
.sheet .active { border-right-color: #5ccdee; }
.slant { font-style: italic; }
.sheet .service { height: 41px; border-bottom: 0; text-align: center; font: 16px/20px "Noto Sans", sans-serif; white-space: nowrap; overflow: hidden; }
.olive { background: #c6ce42; }
.yellow { background: #ff0; }
.service div { width: 256px; }
.head, .r3 td, .r4 td { font: 700 12px/14px "Liberation Serif", serif; white-space: nowrap; }
.sheet .head { border-bottom-color: #000; }
.sheet .mid { text-align: center; }
.r3 td { height: 29px; text-align: center; }
.sheet .r4 td { height: 82px; padding: 0; text-align: center; border-bottom-color: #000; }
.r4 div { display: flex; flex-direction: column; justify-content: flex-end; height: 81px; }
.r4 .cut div { padding-left: 4px; overflow: hidden; }
.data td { height: 20px; text-align: right; font: 12px/18px "Liberation Sans", sans-serif; }
.data td:nth-child(4) { padding-right: 5px; }
.data .twin { padding-right: 4px; }
.sheet .title { text-align: left; padding-left: 5px; color: #f00; font: italic 700 15px/18px "Liberation Serif", serif; }
.sheet .flag { background-image: linear-gradient(135deg, #008000 50%, transparent 50%); background-size: 6px 6px; background-repeat: no-repeat; }

.vscroll { flex: none; width: 20px; display: flex; flex-direction: column; align-items: center; gap: 2px; background: linear-gradient(90deg, #ffeedd, #fff 70%); }
.sb { width: 16px; height: 16px; border: 1px solid #b4c6f5; border-radius: 2px; background: linear-gradient(135deg, #dfe6ff, #bccdfa); }
.sb svg { width: 14px; height: 14px; }
.thumb { width: 15px; height: 38px; border: 1px solid #9fb5ee; border-radius: 2px; background: repeating-linear-gradient(#eef2ff 0 1px, #9fb3e8 1px 2px) center / 7px 8px no-repeat, linear-gradient(90deg, #d3ddff, #bccdfa); }
.vscroll .sb:last-child { margin-top: auto; }

.tabs { flex: none; display: flex; align-items: flex-start; height: 21px; padding-left: 1px; border-top: 1px solid #a09080; border-bottom: 2px solid #fff; background: #ffeedd; }
.nav { width: 18px; height: 18px; }
.nav svg { width: 9px; height: 9px; }
.slash { width: 10px; height: 18px; }
.slash.first { margin-left: 1px; }
.tab { height: 18px; padding: 0 4px 0 1px; line-height: 17px; border-bottom: 1px solid #000; }
.tab + .slash + .tab { padding-left: 2px; }
.tab.current { font-weight: 700; background: #fff; border-bottom: 0; padding: 0 2px 0 0; }
.hscroll { display: flex; align-items: center; width: 190px; height: 18px; margin: 0 20px 0 auto; padding: 0 1px 0 3px; border-left: 2px solid #000; background: linear-gradient(#fff, #fff6ee); }
.hscroll .thumb { width: 16px; height: 16px; margin-left: 16px; background: repeating-linear-gradient(90deg, #eef2ff 0 1px, #9fb3e8 1px 2px) center / 8px 7px no-repeat, linear-gradient(#d3ddff, #bccdfa); }
.hscroll .sb:last-child { margin-left: auto; }

.taskbar { flex: none; display: flex; align-items: center; height: 30px; gap: 3px; background: linear-gradient(#4a8cf5, #2a62e0 15%, #245adb 80%, #1c47b0); color: #fff; }
.start { width: 104px; height: 30px; gap: 4px; margin-right: 6px; padding-right: 14px; border-radius: 0 10px 10px 0; background: linear-gradient(#5fb35f, #3a9a3a 20%, #369036 75%, #256b25); font: italic 700 19px/24px "Noto Sans", sans-serif; text-shadow: 1px 1px 2px #1a4a1a; }
.start svg { width: 20px; height: 20px; }
.task { width: 158px; height: 25px; gap: 4px; justify-content: flex-start; padding-left: 9px; border-radius: 3px; background: linear-gradient(#6aa2fa, #3f80f2 20%, #3c7cf0 85%, #2e66d8); }
.task svg { width: 16px; height: 16px; }
.task.pressed { background: #1e50b8; box-shadow: inset 1px 1px 2px #123a8c; }
.tray { display: flex; align-items: center; align-self: stretch; gap: 2px; margin-left: auto; padding-right: 14px; background: linear-gradient(#3ab0f8, #1290ea 20%, #1391ec 80%, #0f70c4) 9px 0 no-repeat; }
.tray svg { width: 17px; height: 17px; }
.tray time { margin-left: 8px; }
```
